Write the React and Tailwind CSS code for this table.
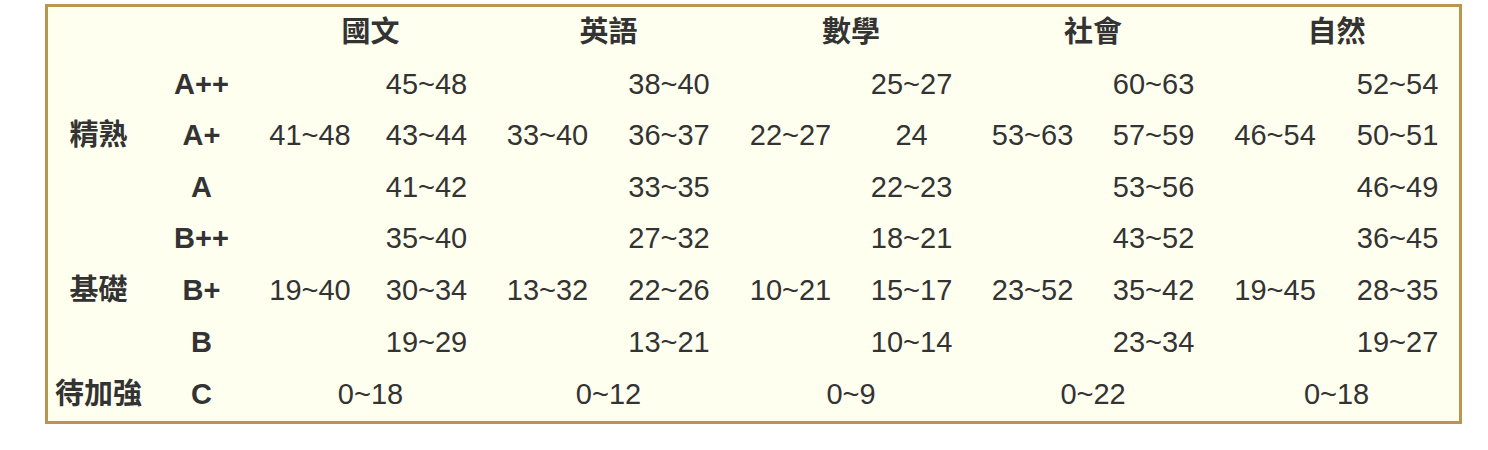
const subjects = [
  { name: '國文', ranges: ['41~48', '19~40', '0~18'], detail: ['45~48', '43~44', '41~42', '35~40', '30~34', '19~29'] },
  { name: '英語', ranges: ['33~40', '13~32', '0~12'], detail: ['38~40', '36~37', '33~35', '27~32', '22~26', '13~21'] },
  { name: '數學', ranges: ['22~27', '10~21', '0~9'], detail: ['25~27', '24', '22~23', '18~21', '15~17', '10~14'] },
  { name: '社會', ranges: ['53~63', '23~52', '0~22'], detail: ['60~63', '57~59', '53~56', '43~52', '35~42', '23~34'] },
  { name: '自然', ranges: ['46~54', '19~45', '0~18'], detail: ['52~54', '50~51', '46~49', '36~45', '28~35', '19~27'] },
]

const grades = ['A++', 'A+', 'A', 'B++', 'B+', 'B']
const colWidths = [101, 105, 112, 121, 121, 122, 121, 121, 121, 121, 122, 123]

function App() {
  return (
    <div className="bg-white min-h-[450px] pt-[4px] pl-[45px]">
      <div
        className="w-[1417px] border-[3px] border-[#b9964f] bg-[#fffff0] text-[#333]"
        style={{ fontFamily: '"Liberation Sans", "Noto Sans CJK TC", sans-serif' }}
      >
        <table className="w-full table-fixed border-collapse text-[29px] leading-[51.6px]">
          <colgroup>
            {colWidths.map((w, i) => (
              <col key={i} style={{ width: w }} />
            ))}
          </colgroup>
          <thead>
            <tr className="h-[51.6px]">
              <th colSpan={2}></th>
              {subjects.map((s) => (
                <th key={s.name} colSpan={2} className="p-0 font-bold text-center">
                  {s.name}
                </th>
              ))}
            </tr>
          </thead>
          <tbody>
            {grades.map((g, i) => (
              <tr key={g} className="h-[51.6px]">
                {i === 0 && (
                  <th rowSpan={3} className="p-0 font-bold text-center">精熟</th>
                )}
                {i === 3 && (
                  <th rowSpan={3} className="p-0 font-bold text-center">基礎</th>
                )}
                <th className="p-0 font-bold text-center">{g}</th>
                {subjects.map((s) => (
                  <>
                    {i % 3 === 0 && (
                      <td key={s.name + 'r'} rowSpan={3} className="p-0 text-center align-middle">
                        {s.ranges[i / 3]}
                      </td>
                    )}
                    <td key={s.name + 'd'} className="p-0 text-center">
                      {s.detail[i]}
                    </td>
                  </>
                ))}
              </tr>
            ))}
            <tr className="h-[53px]">
              <th className="p-0 font-bold text-center whitespace-nowrap">待加強</th>
              <th className="p-0 font-bold text-center">C</th>
              {subjects.map((s) => (
                <td key={s.name} colSpan={2} className="p-0 text-center">
                  {s.ranges[2]}
                </td>
              ))}
            </tr>
          </tbody>
        </table>
      </div>
    </div>
  )
}

export default App
